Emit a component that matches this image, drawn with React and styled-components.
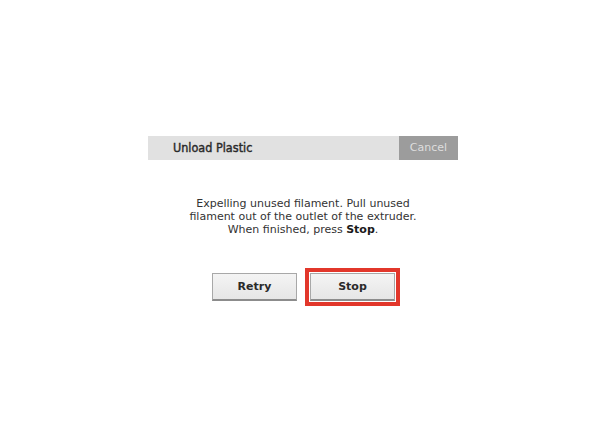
import React from 'react';
import styled, { createGlobalStyle } from 'styled-components';

const Global = createGlobalStyle`
  html, body {
    margin      : 0;
    padding     : 0;
    background  : #ffffff;
    font-family : "DejaVu Sans", Verdana, sans-serif;
  }
`;

const Page = styled.div`
  width      : 592px;
  height     : 444px;
  padding    : 136px 0 0 148px;
  box-sizing : border-box;
`;

const Dialog = styled.div`
  width          : 310px;
  display        : flex;
  flex-direction : column;
`;

const Header = styled.div`
  display    : flex;
  height     : 24px;
  background : #e1e1e1;
`;

const Title = styled.div`
  flex                 : 1;
  padding-left         : 25px;
  line-height          : 24px;
  font-size            : 12.5px;
  font-stretch         : condensed;
  font-family          : "DejaVu Sans Condensed", "DejaVu Sans", sans-serif;
  -webkit-text-stroke  : 0.4px #2a2a2a;
  color                : #2a2a2a;
`;

const Cancel = styled.div`
  width       : 59px;
  background  : #9c9c9c;
  color       : #dedede;
  font-size   : 11px;
  line-height : 24px;
  text-align  : center;
`;

const Message = styled.div`
  margin-top  : 37px;
  text-align  : center;
  font-size   : 11px;
  line-height : 13px;
  color       : #333333;

  b { color: #1a1a1a; }
`;

const Buttons = styled.div`
  display      : flex;
  align-items  : center;
  margin-top   : 32px;
  padding-left : 64px;
  gap          : 8px;
`;

const Button = styled.div`
  width           : 83px;
  height          : 25px;
  border          : 1px solid #a8a8a8;
  border-bottom   : 2px solid #8c8c8c;
  background      : linear-gradient(#f4f4f4, #e6e6e6);
  font-size       : 11px;
  font-weight     : bold;
  color           : #2a2a2a;
  display         : flex;
  align-items     : center;
  justify-content : center;
`;

const Focus = styled.div`
  border     : 4px solid #e2372b;
  padding    : 1px;
  background : #ffffff;
`;

const App = () => (
  <Page>
    <Global />
    <Dialog>
      <Header>
        <Title>Unload Plastic</Title>
        <Cancel>Cancel</Cancel>
      </Header>
      <Message>
        Expelling unused filament. Pull unused<br />
        filament out of the outlet of the extruder.<br />
        When finished, press <b>Stop</b>.
      </Message>
      <Buttons>
        <Button>Retry</Button>
        <Focus>
          <Button>Stop</Button>
        </Focus>
      </Buttons>
    </Dialog>
  </Page>
);

export default App;
